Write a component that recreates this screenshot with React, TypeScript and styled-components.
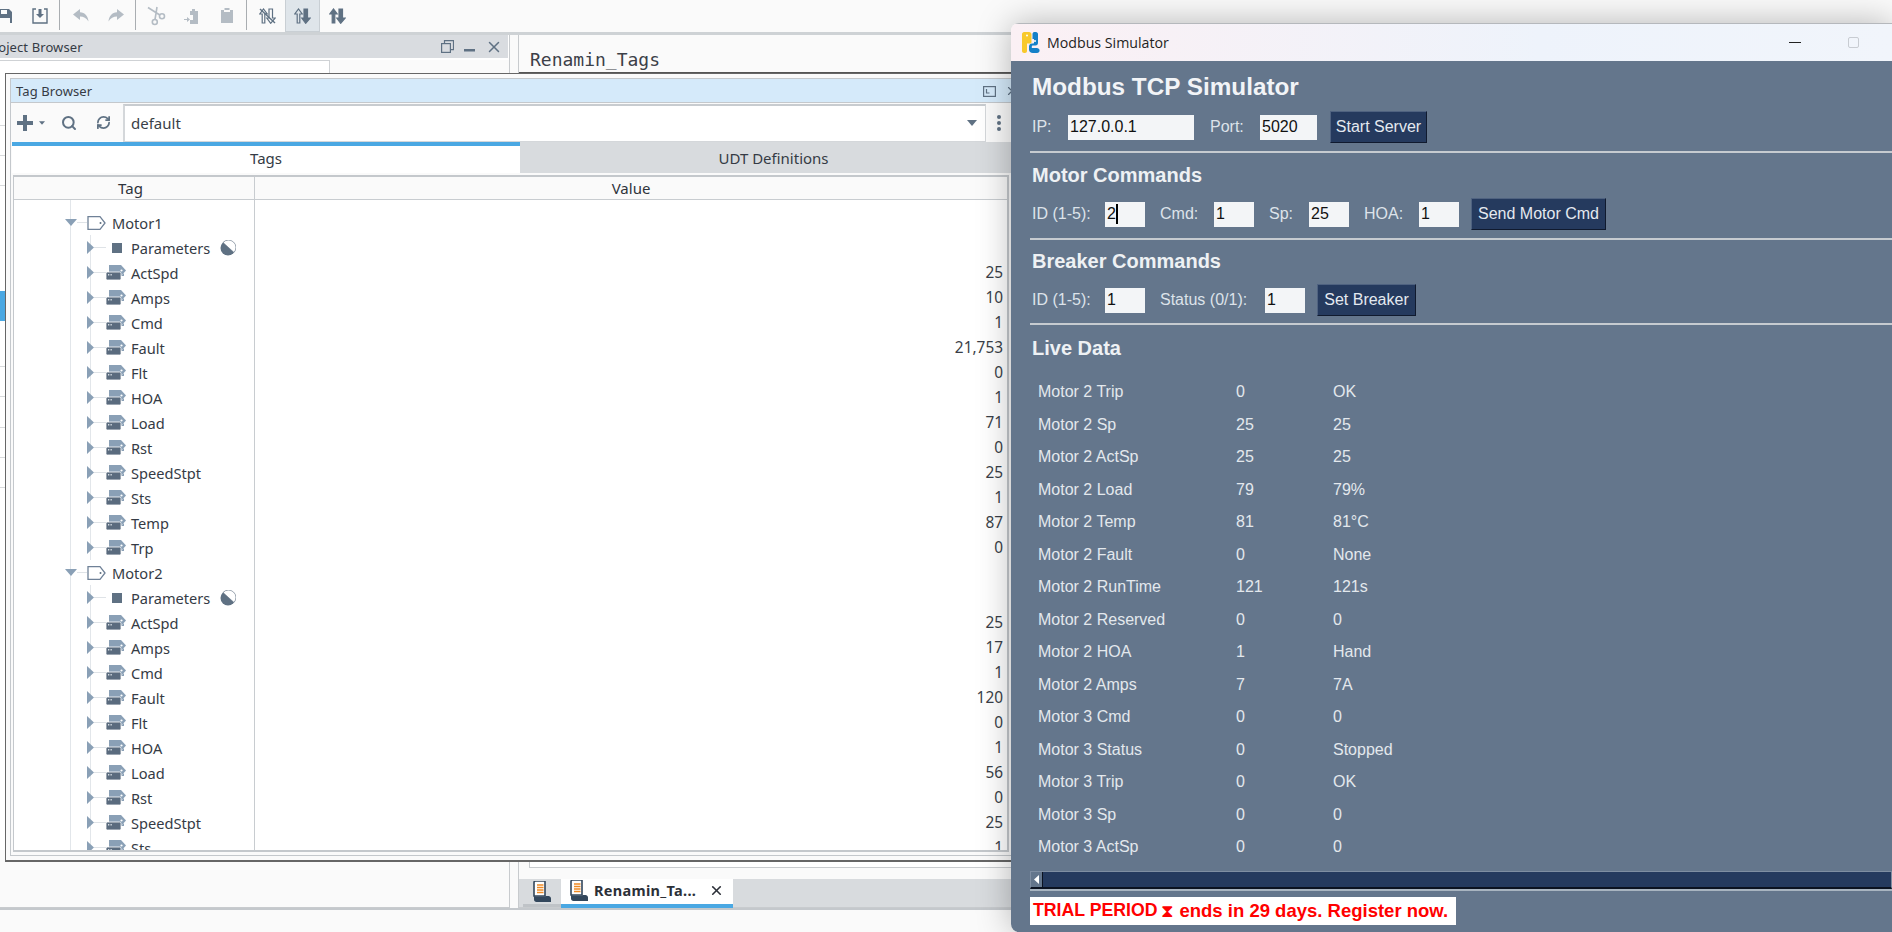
import React from 'react';
import styled, { createGlobalStyle } from 'styled-components';
import { Search, RefreshCw, X } from 'lucide-react';

const GlobalStyle = createGlobalStyle`
  html, body {
    margin: 0;
    height: 100%;
    overflow: hidden;
    background: #fafafa;
  }
  #root {
    height: 100%;
  }
  * {
    box-sizing: border-box;
  }
`;

const UI_FONT = `"Noto Sans", "Open Sans", sans-serif`;
const SIM_FONT = `"Liberation Sans", Arial, sans-serif`;

const Desk = styled.div`
  position: relative;
  width: 100%;
  height: 100%;
  overflow: hidden;
  font-family: ${UI_FONT};
  font-size: 15px;
  color: #353b45;
`;

const Ide = styled.div`
  display: flex;
  flex-direction: column;
  height: 100%;
`;

const Toolbar = styled.div`
  flex: none;
  height: 35px;
  display: flex;
  align-items: flex-start;
  border-bottom: 3px solid #ced2d5;
  overflow: hidden;
`;

const ToolStrip = styled.div`
  display: flex;
  height: 32px;
  margin-left: -13px;
`;

const ToolButton = styled.div<{ $active?: boolean }>`
  width: 35px;
  height: 32px;
  display: flex;
  align-items: center;
  justify-content: center;
  color: #5f7183;
  background: ${(p) => (p.$active ? '#dfe5ea' : 'transparent')};
  border: 1px solid ${(p) => (p.$active ? '#c9cfd4' : 'transparent')};
  border-top: none;
`;

const ToolSep = styled.div`
  width: 1px;
  height: 30px;
  margin: 0 3px 0 2px;
  background: #a9adb1;
`;

const Workspace = styled.div`
  flex: 1;
  min-height: 0;
  display: flex;
`;

const LeftPane = styled.div`
  width: 510px;
  display: flex;
  flex-direction: column;
  border-right: 1px solid #c8cbce;
  border-bottom: 1px solid #c8cbce;
  background: #fff;
`;

const DockTitle = styled.div`
  height: 23px;
  flex: none;
  display: flex;
  align-items: center;
  justify-content: space-between;
  background: #d9dce0;
  margin-right: 1px;
  padding-right: 5px;
  overflow: hidden;
`;

const DockName = styled.span`
  margin-left: -15px;
  white-space: nowrap;
  font-size: 13px;
  letter-spacing: 0.1px;
`;

const DockIcons = styled.div`
  display: flex;
  align-items: center;
  gap: 10px;
  color: #5f7183;
`;

const DockBody = styled.div`
  flex: 1;
  display: flex;
  align-items: flex-start;
  background: #fafafa;
  border-top: 2px solid #fff;
`;

const TreePanel = styled.div`
  width: 330px;
  height: 790px;
  background: #fff;
  border-right: 1px solid #cfd2d5;
  border-top: 1px solid #cfd2d5;
  padding-top: 38px;
`;

const TreeRow = styled.div<{ $h: number; $selected?: boolean; $plain?: boolean }>`
  height: ${(p) => p.$h}px;
  background: ${(p) => (p.$selected ? '#4aa8e3' : 'transparent')};
  border-bottom: 1px solid ${(p) => (p.$plain ? 'transparent' : '#d8dadc')};
`;

const Gutter = styled.div`
  width: 9px;
  flex: none;
  background: #fafafa;
  border-right: 1px solid #c8cbce;
`;

const CenterPane = styled.div`
  flex: 1;
  display: flex;
  flex-direction: column;
  min-width: 0;
`;

const FileHeader = styled.div`
  height: 38px;
  flex: none;
  display: flex;
  align-items: center;
  padding: 12px 0 0 11px;
  font-family: "DejaVu Sans Mono", monospace;
  font-size: 18px;
  color: #3c4048;
  border-bottom: 1px solid #555;
`;

const FileBody = styled.div`
  flex: 1;
  background: #fafafa;
  padding: 0 0 0 10px;
`;

const FileTable = styled.div`
  height: 795px;
  border: 1px solid #c8cbce;
  background: #fff;
`;

const TabStrip = styled.div`
  height: 29px;
  flex: none;
  display: flex;
  align-items: flex-start;
  background: #d8dbde;
  border-bottom: 1px solid #c8cbce;
`;

const StripIcon = styled.div`
  width: 38px;
  height: 28px;
  margin-left: 4px;
  display: flex;
  align-items: center;
  justify-content: center;
  border-bottom: 3px solid #bfc3c7;
`;

const FileTab = styled.div`
  width: 172px;
  height: 29px;
  display: flex;
  align-items: center;
  gap: 6px;
  padding: 0 9px 3px 9px;
  background: #fff;
  border-bottom: 4px solid #4aa8e3;
  font-weight: 700;
  color: #2c3038;
`;

const FileTabName = styled.span`
  flex: 1;
  font-size: 14.5px;
  white-space: nowrap;
  letter-spacing: 0.3px;
`;

const StatusBar = styled.div`
  flex: none;
  height: 24px;
  border-top: 2px solid #c4c8cc;
  background: #fafafa;
`;

/* floating tag browser */
const TagWindow = styled.div`
  position: absolute;
  left: 5px;
  top: 73px;
  width: 1020px;
  height: 789px;
  padding: 4px 0 4px 4px;
  background: #fafafa;
  border: 1px solid #666;
  border-bottom-width: 2px;
  display: flex;
  flex-direction: column;
`;

const TagFrame = styled.div`
  flex: 1;
  min-height: 0;
  display: flex;
  flex-direction: column;
  border: 1px solid #c4c8cc;
  border-right: none;
`;

const TagTitle = styled.div`
  height: 24px;
  flex: none;
  display: flex;
  align-items: center;
  justify-content: space-between;
  padding: 1px 0 0 5px;
  font-size: 13px;
  background: #d5eafa;
  border-bottom: 1px solid #c4c8cc;
  letter-spacing: 0.1px;
`;

const TitleIcons = styled.div`
  display: flex;
  align-items: center;
  gap: 9px;
  color: #5f7183;
  padding-right: 5px;
`;

const TagTools = styled.div`
  height: 39px;
  flex: none;
  display: flex;
  align-items: center;
  color: #5f7183;
  padding-left: 6px;
`;

const TagToolIcon = styled.div<{ $w: number }>`
  width: ${(p) => p.$w}px;
  display: flex;
  align-items: center;
  justify-content: flex-start;
`;

const ProviderSelect = styled.div`
  width: 863px;
  height: 38px;
  display: flex;
  align-items: center;
  justify-content: space-between;
  padding: 0 8px 0 6px;
  background: #fff;
  border: 1px solid #d4d7da;
  border-top: 2px solid #c8ccd0;
  border-left: 2px solid #d4d7da;
  font-size: 15px;
  color: #3a3f48;
`;

const Dots = styled.div`
  margin-left: 11px;
  display: flex;
  flex-direction: column;
  gap: 2px;
`;

const Dot = styled.span`
  width: 4px;
  height: 4px;
  border-radius: 50%;
  background: #5f7183;
`;

const TabBar = styled.div`
  height: 31px;
  flex: none;
  display: flex;
  margin-left: 1px;
`;

const TabItem = styled.div<{ $active?: boolean }>`
  width: ${(p) => (p.$active ? '508px' : 'auto')};
  flex: ${(p) => (p.$active ? 'none' : '1')};
  display: flex;
  align-items: center;
  justify-content: center;
  background: ${(p) => (p.$active ? '#fff' : '#d8dbde')};
  border-top: 4px solid ${(p) => (p.$active ? '#4aa8e3' : '#d8dbde')};
  padding: 0 0 4px ${(p) => (p.$active ? 0 : 3)}px;
  font-size: 15px;
`;

const TablePane = styled.div`
  width: 996px;
  flex: 1;
  min-height: 0;
  margin: 2px 0 3px 2px;
  display: flex;
  flex-direction: column;
  border: 1px solid #c4c8cc;
  border-width: 2px 2px 2px 1px;
`;

const TableHeader = styled.div`
  height: 23px;
  flex: none;
  display: grid;
  grid-template-columns: 241px 1fr;
  background: #fafafa;
  border-bottom: 1px solid #c8ccd0;
`;

const HeaderCell = styled.div`
  display: flex;
  align-items: center;
  justify-content: center;
  font-size: 15px;
  color: #2f343c;
  &:first-child {
    border-right: 1px solid #c8ccd0;
    padding-right: 7px;
  }
`;

const TableBody = styled.div`
  flex: 1;
  min-height: 0;
  display: grid;
  grid-template-columns: 241px 1fr;
  overflow: hidden;
  background: #fff;
`;

const TagColumn = styled.div`
  padding-top: 10px;
  border-right: 1px solid #c8ccd0;
  background: linear-gradient(#e2e6ea, #e2e6ea) 56px 0 / 1px 100% no-repeat;
`;

const ValueColumn = styled.div`
  padding: 10px 4px 0 0;
`;

const TreeItem = styled.div<{ $level: number }>`
  height: 25px;
  display: flex;
  align-items: center;
  padding-left: ${(p) => (p.$level === 0 ? 51 : 73)}px;
  font-size: 14.6px;
  white-space: nowrap;
  background: ${(p) =>
    p.$level === 0 ? 'none' : 'linear-gradient(#e2e6ea, #e2e6ea) 76px 0 / 1px 100% no-repeat'};
`;

const Connector = styled.span<{ $w: number }>`
  width: ${(p) => p.$w}px;
  height: 1px;
  flex: none;
  background: #dfe3e7;
`;

const ItemIcon = styled.span`
  width: 25px;
  flex: none;
  display: flex;
  align-items: center;
`;

const MotorName = styled.span`
  margin-left: 6px;
`;

const ValueCell = styled.div`
  height: 25px;
  display: flex;
  align-items: center;
  justify-content: flex-end;
  font-size: 15.4px;
  color: #3a3f48;
`;

const StateIcon = styled.span`
  margin-left: 10px;
  display: flex;
`;

/* modbus simulator window */
const SimWindow = styled.div`
  position: absolute;
  left: 1011px;
  top: 23px;
  right: 0;
  bottom: 0;
  display: flex;
  flex-direction: column;
  border-radius: 8px 0 0 8px;
  overflow: hidden;
  box-shadow: 0 0 34px rgba(0, 0, 0, 0.28);
`;

const SimTitle = styled.div`
  height: 38px;
  flex: none;
  display: flex;
  align-items: center;
  padding: 0 0 1px 11px;
  background: linear-gradient(90deg, #fbf0f4, #eef3fb 60%, #f1f5fb);
  border-top: 1px solid #b5b8bc;
  font-size: 14.2px;
  color: #1f1f1f;
  font-family: "Open Sans", "Noto Sans", sans-serif;
`;

const SimTitleText = styled.span`
  margin-left: 7px;
  flex: 1;
`;

const WinButton = styled.span`
  width: 58px;
  display: flex;
  justify-content: center;
`;

const WinSpacer = styled.span`
  width: 10px;
`;

const MinGlyph = styled.span`
  width: 12px;
  height: 1px;
  background: #222;
`;

const MaxGlyph = styled.span`
  width: 11px;
  height: 11px;
  border: 1px solid #c8ccd2;
  border-radius: 2px;
`;

const SimBody = styled.div`
  flex: 1;
  min-height: 0;
  padding-left: 19px;
  background: #64768c;
  color: #e6ebf0;
  font-family: ${SIM_FONT};
  font-size: 16px;
`;

const SimHeading = styled.div`
  margin: 12px 0 0 2px;
  height: 28px;
  line-height: 28px;
  font-size: 24.3px;
  font-weight: 700;
  color: #f2f4f7;
`;

const SectionHeading = styled.div<{ $top: number }>`
  margin: ${(p) => p.$top}px 0 0 2px;
  height: 24px;
  line-height: 24px;
  font-size: 20px;
  font-weight: 700;
  color: #eef1f4;
`;

const FormRow = styled.div<{ $top: number }>`
  margin: ${(p) => p.$top}px 0 0 2px;
  height: 32px;
  display: flex;
  align-items: center;
`;

const FieldLabel = styled.span<{ $w: number; $gap?: number }>`
  width: ${(p) => p.$w}px;
  margin-left: ${(p) => p.$gap ?? 0}px;
  flex: none;
  color: #dde3ea;
  white-space: nowrap;
`;

const Field = styled.div<{ $w: number }>`
  width: ${(p) => p.$w}px;
  height: 25px;
  flex: none;
  display: flex;
  align-items: center;
  padding-left: 2px;
  background: #f3f5f7;
  color: #111;
`;

const Caret = styled.span`
  width: 2px;
  height: 20px;
  background: #000;
`;

const SimButton = styled.div<{ $w: number; $gap: number }>`
  width: ${(p) => p.$w}px;
  height: 32px;
  margin-left: ${(p) => p.$gap}px;
  flex: none;
  display: flex;
  align-items: center;
  justify-content: center;
  background: #253a5e;
  color: #e4e9f0;
  border: 1px solid;
  border-color: #4f6280 #101a2e #101a2e #4f6280;
`;

const Divider = styled.div<{ $top: number }>`
  height: 2px;
  margin-top: ${(p) => p.$top}px;
  background: #c6cbd0;
`;

const DataList = styled.div`
  margin-top: 16px;
`;

const DataRow = styled.div`
  height: 32.5px;
  display: grid;
  grid-template-columns: 198px 97px 1fr;
  align-items: center;
  padding-left: 8px;
  color: #e3e8ed;
`;

const ScrollTrack = styled.div`
  height: 18px;
  margin-top: 7px;
  display: flex;
  background: #253a5e;
  border: 1px solid;
  border-color: #7f8ea2 #7f8ea2 #0b1220 #7f8ea2;
  border-bottom-width: 2px;
  box-shadow: 0 2px 0 #a8b4c0;
`;

const ScrollArrow = styled.div`
  width: 12px;
  display: flex;
  align-items: center;
  justify-content: center;
  background: #64768c;
  border-right: 1px solid #0b1220;
`;

const TrialNote = styled.div`
  width: 426px;
  height: 28px;
  margin-top: 8px;
  padding-left: 3px;
  display: flex;
  align-items: center;
  white-space: nowrap;
  background: #fff;
  color: #ff0000;
  font-size: 17.7px;
  font-weight: 700;
`;

const TrialTail = styled.span`
  font-size: 18.5px;
`;

const HourGlass = styled.span`
  font-family: "DejaVu Sans", sans-serif;
  font-size: 18px;
  margin: 0 5px 0 4px;
  font-weight: 400;
`;

/* icons */
const Floppy = () => (
  <svg width="16" height="16" viewBox="0 0 16 16" fill="#5f7183">
    <path d="M1 1h11l3 3v11H1z" />
    <rect x="4" y="2" width="6" height="4" fill="#fafafa" />
    <rect x="3" y="10" width="10" height="5" fill="#fafafa" />
  </svg>
);

const SaveDown = () => (
  <svg width="16" height="16" viewBox="0 0 16 16" fill="none" stroke="#5f7183" strokeWidth="1.4">
    <path d="M4 1H1v14h14V1h-3" />
    <path d="M6.500 1h3v5H12L8 10 4 6h2.500z" fill="#5f7183" stroke="none" />
  </svg>
);

const Undo = ({ flip }: { flip?: boolean }) => (
  <svg
    width="16"
    height="13"
    viewBox="0 0 16 13"
    fill="#b4bcc4"
    style={flip ? { transform: 'scaleX(-1)' } : undefined}
  >
    <path d="M7 0L0 5.500 7 11V7.500c3.500 0 6.500 1.500 8.500 5C15 7 12 3.500 7 3.200z" />
  </svg>
);

const ScissorsIcon = () => (
  <svg width="20" height="20" viewBox="0 0 20 20" fill="none" stroke="#b4bcc4" strokeWidth="1.6">
    <path d="M1 1.500L12.800 9M10 1L8 13.500" />
    <circle cx="7.800" cy="16" r="2.500" />
    <circle cx="15" cy="10.300" r="2.500" />
  </svg>
);

const PasteIn = () => (
  <svg width="16" height="16" viewBox="0 0 16 16" fill="#b4bcc4">
    <path d="M6 3h2V1h3v2h3v13H6v-4h3V7H6z" />
    <path d="M0 11h3V9l3 2.500L3 14v-2H0z" />
  </svg>
);

const Clip = () => (
  <svg width="12" height="15" viewBox="0 0 12 15" fill="#b4bcc4">
    <path d="M0 2h3.500V0h5v2H12v13H0z" />
    <rect x="3" y="2" width="6" height="2" fill="#fafafa" />
  </svg>
);

const SortArrows = ({ upFilled, downFilled, slashed }: { upFilled?: boolean; downFilled?: boolean; slashed?: boolean }) => (
  <svg width="17" height="16" viewBox="0 0 17 16" fill="none" stroke="#5f7183" strokeWidth="1.2">
    <path d="M3.200 15V6H.8L4.500 1 8.200 6H5.800v9z" fill={upFilled ? '#5f7183' : 'none'} />
    <path d="M10 1h3.500v9h2.700L11.700 15.300 7.800 10H10z" fill={downFilled ? '#5f7183' : 'none'} />
    {slashed && <path d="M1 1l15 14" strokeWidth="1.4" />}
  </svg>
);

const RestoreIcon = () => (
  <svg width="13" height="13" viewBox="0 0 13 13" fill="none" stroke="#5f7183" strokeWidth="1.2">
    <rect x="0.6" y="3.600" width="8.800" height="8.800" />
    <path d="M3.500 3.500V0.600h9v9H9.500" />
  </svg>
);

const MinIcon = () => (
  <svg width="11" height="11" viewBox="0 0 11 11" fill="#5f7183">
    <rect x="0" y="8" width="11" height="2.500" />
  </svg>
);

const PanelIcon = () => (
  <svg width="13" height="11" viewBox="0 0 13 11" fill="none" stroke="#5f7183" strokeWidth="1.2">
    <rect x="0.6" y="0.6" width="11.800" height="9.800" />
    <path d="M3.500 3v4h3" />
  </svg>
);

const Plus = () => (
  <svg width="16" height="16" viewBox="0 0 16 16" fill="#5f7183">
    <path d="M6 0h4v6h6v4h-6v6H6v-6H0V6h6z" />
  </svg>
);

const Caret8 = ({ w, color }: { w: number; color: string }) => (
  <svg width={w} height={w / 2 + 1} viewBox="0 0 12 7" fill={color}>
    <path d="M0 0h12L6 7z" />
  </svg>
);

const DownCaret = () => (
  <svg width="12" height="7" viewBox="0 0 12 7" fill="#8aa0b6" style={{ flex: 'none' }}>
    <path d="M0 0h12L6 7z" />
  </svg>
);

const RightCaret = () => (
  <svg width="7" height="13" viewBox="0 0 7 13" fill="#8aa0b6" style={{ flex: 'none' }}>
    <path d="M0 0l7 6.500L0 13z" />
  </svg>
);

const FolderTag = () => (
  <svg width="19" height="14" viewBox="0 0 19 14" fill="none" style={{ flex: 'none' }}>
    <path d="M1 .7h12l5 6.300-5 6.300H1z" stroke="#6f8197" strokeWidth="1.3" />
    <circle cx="13.500" cy="7" r="1" fill="#5f7183" />
  </svg>
);

const DataTag = () => (
  <svg width="20" height="16" viewBox="0 0 20 16" style={{ flex: 'none' }}>
    <path d="M3 0h12l5 5.500L15 11H3z" fill="#8aa0b6" />
    <path d="M15 11l3-3v3z" fill="#8aa0b6" />
    <circle cx="15.500" cy="5.500" r="1.100" fill="#fff" />
    <rect x="0" y="7" width="15" height="8" rx="1.500" fill="#5a6b7e" stroke="#fff" strokeWidth="0.8" />
    <rect x="2" y="9" width="1.300" height="1.500" fill="#d8dee4" />
    <rect x="4.500" y="9" width="1.300" height="1.500" fill="#d8dee4" />
  </svg>
);

const SquareMark = () => (
  <svg width="16" height="10" viewBox="0 0 16 10">
    <rect x="6" y="0" width="10" height="10" fill="#5f7183" />
  </svg>
);

const HalfCircle = () => (
  <svg width="16" height="16" viewBox="0 0 16 16">
    <circle cx="8" cy="8" r="7.500" fill="#5f7183" />
    <path d="M3 2.500A7 7 0 0 1 14 12.500z" fill="#fff" stroke="#5f7183" strokeWidth="0.6" />
  </svg>
);

const PythonLogo = () => (
  <svg width="18" height="21" viewBox="0 0 18 21">
    <path
      d="M2 0h5c1.500 0 2.500 1 2.500 2.500V10c0 1-.7 1.500-1.500 1.500H5V19c0 1-1 2-2 2H2c-1 0-2-1-2-2V2c0-1 1-2 2-2z"
      fill="#f8c92c"
    />
    <circle cx="5" cy="3.500" r="1" fill="#fff" />
    <path
      d="M12 0h2c1 0 2 1 2 2v9c0 1.500-1 2.500-2.500 2.500H11c-.8 0-1.200.5-1.200 1.200V16h5c1.500 0 2.800 1 2.800 2.500S16.500 21 15 21h-4c-2.500 0-4-1.500-4-3.500v-3c0-2 1.500-3 3-3h1c.6 0 1-.4 1-1V7h-1.500V2c0-1 .8-2 1.500-2z"
      fill="#1481c8"
    />
    <circle cx="13" cy="9" r="1" fill="#fff" />
  </svg>
);

const DocIcon = () => (
  <svg width="18" height="21" viewBox="0 0 18 21">
    <path d="M1 1.500C1 .7 1.700 0 2.500 0H12v15H1z" fill="#fff" stroke="#33475c" strokeWidth="1.600" />
    <path d="M3 15.500h9.500V15h3c1.200 0 2.500 1 2.500 2.500V21H3.500C2 21 1 20 1 18.500V15z" fill="#33475c" />
    <path d="M4 4h6.500M4 6.500h6.500M4 9h6.500M4 11.500h6.500" stroke="#f08a24" strokeWidth="1.300" />
  </svg>
);

const tagChildren = (values: Record<string, string>) => Object.entries(values);

const motor1 = tagChildren({
  ActSpd: '25',
  Amps: '10',
  Cmd: '1',
  Fault: '21,753',
  Flt: '0',
  HOA: '1',
  Load: '71',
  Rst: '0',
  SpeedStpt: '25',
  Sts: '1',
  Temp: '87',
  Trp: '0',
});

const motor2 = tagChildren({
  ActSpd: '25',
  Amps: '17',
  Cmd: '1',
  Fault: '120',
  Flt: '0',
  HOA: '1',
  Load: '56',
  Rst: '0',
  SpeedStpt: '25',
  Sts: '1',
});

const liveData = [
  ['Motor 2 Trip', '0', 'OK'],
  ['Motor 2 Sp', '25', '25'],
  ['Motor 2 ActSp', '25', '25'],
  ['Motor 2 Load', '79', '79%'],
  ['Motor 2 Temp', '81', '81°C'],
  ['Motor 2 Fault', '0', 'None'],
  ['Motor 2 RunTime', '121', '121s'],
  ['Motor 2 Reserved', '0', '0'],
  ['Motor 2 HOA', '1', 'Hand'],
  ['Motor 2 Amps', '7', '7A'],
  ['Motor 3 Cmd', '0', '0'],
  ['Motor 3 Status', '0', 'Stopped'],
  ['Motor 3 Trip', '0', 'OK'],
  ['Motor 3 Sp', '0', '0'],
  ['Motor 3 ActSp', '0', '0'],
];

const leftRows: { h: number; selected?: boolean; plain?: boolean }[] = [
  { h: 27 },
  { h: 30 },
  { h: 30 },
  { h: 105, plain: true },
  { h: 30, selected: true, plain: true },
  { h: 46 },
  { h: 30 },
  { h: 31 },
  { h: 30 },
  { h: 30 },
];

function MotorTree({ name, tags }: { name: string; tags: [string, string][] }) {
  return (
    <>
      <TreeItem $level={0}>
        <DownCaret />
        <Connector $w={10} />
        <FolderTag />
        <MotorName>{name}</MotorName>
      </TreeItem>
      <TreeItem $level={1}>
        <RightCaret />
        <Connector $w={12} />
        <ItemIcon>
          <SquareMark />
        </ItemIcon>
        Parameters
        <StateIcon>
          <HalfCircle />
        </StateIcon>
      </TreeItem>
      {tags.map(([tag]) => (
        <TreeItem $level={1} key={tag}>
          <RightCaret />
          <Connector $w={12} />
          <ItemIcon>
            <DataTag />
          </ItemIcon>
          {tag}
        </TreeItem>
      ))}
    </>
  );
}

function MotorValues({ tags }: { tags: [string, string][] }) {
  return (
    <>
      <ValueCell />
      <ValueCell />
      {tags.map(([tag, value]) => (
        <ValueCell key={tag}>{value}</ValueCell>
      ))}
    </>
  );
}

function App() {
  return (
    <Desk>
      <GlobalStyle />
      <Ide>
        <Toolbar>
          <ToolStrip>
            <ToolButton>
              <Floppy />
            </ToolButton>
            <ToolButton>
              <SaveDown />
            </ToolButton>
            <ToolSep />
            <ToolButton>
              <Undo />
            </ToolButton>
            <ToolButton>
              <Undo flip />
            </ToolButton>
            <ToolSep />
            <ToolButton>
              <ScissorsIcon />
            </ToolButton>
            <ToolButton>
              <PasteIn />
            </ToolButton>
            <ToolButton>
              <Clip />
            </ToolButton>
            <ToolSep />
            <ToolButton>
              <SortArrows slashed />
            </ToolButton>
            <ToolButton $active>
              <SortArrows downFilled />
            </ToolButton>
            <ToolButton>
              <SortArrows upFilled downFilled />
            </ToolButton>
          </ToolStrip>
        </Toolbar>

        <Workspace>
          <LeftPane>
            <DockTitle>
              <DockName>Project Browser</DockName>
              <DockIcons>
                <RestoreIcon />
                <MinIcon />
                <X size={18} strokeWidth={2} />
              </DockIcons>
            </DockTitle>
            <DockBody>
              <TreePanel>
                {leftRows.map((row, i) => (
                  <TreeRow key={i} $h={row.h} $selected={row.selected} $plain={row.plain} />
                ))}
              </TreePanel>
            </DockBody>
          </LeftPane>
          <Gutter />
          <CenterPane>
            <FileHeader>Renamin_Tags</FileHeader>
            <FileBody>
              <FileTable />
            </FileBody>
            <TabStrip>
              <StripIcon>
                <DocIcon />
              </StripIcon>
              <FileTab>
                <DocIcon />
                <FileTabName>Renamin_Ta...</FileTabName>
                <X size={15} strokeWidth={2.6} color="#2c3038" />
              </FileTab>
            </TabStrip>
          </CenterPane>
        </Workspace>
        <StatusBar />
      </Ide>

      <TagWindow>
        <TagFrame>
          <TagTitle>
            Tag Browser
            <TitleIcons>
              <PanelIcon />
              <X size={14} strokeWidth={2} />
            </TitleIcons>
          </TagTitle>
          <TagTools>
            <TagToolIcon $w={22}>
              <Plus />
            </TagToolIcon>
            <TagToolIcon $w={22}>
              <Caret8 w={6} color="#5f7183" />
            </TagToolIcon>
            <TagToolIcon $w={35}>
              <Search size={16} strokeWidth={3} />
            </TagToolIcon>
            <TagToolIcon $w={27}>
              <RefreshCw size={15} strokeWidth={2.8} />
            </TagToolIcon>
            <ProviderSelect>
              default
              <Caret8 w={10} color="#5f7183" />
            </ProviderSelect>
            <Dots>
              <Dot />
              <Dot />
              <Dot />
            </Dots>
          </TagTools>
          <TabBar>
            <TabItem $active>Tags</TabItem>
            <TabItem>UDT Definitions</TabItem>
          </TabBar>
          <TablePane>
            <TableHeader>
              <HeaderCell>Tag</HeaderCell>
              <HeaderCell>Value</HeaderCell>
            </TableHeader>
            <TableBody>
              <TagColumn>
                <MotorTree name="Motor1" tags={motor1} />
                <MotorTree name="Motor2" tags={motor2} />
              </TagColumn>
              <ValueColumn>
                <MotorValues tags={motor1} />
                <MotorValues tags={motor2} />
              </ValueColumn>
            </TableBody>
          </TablePane>
        </TagFrame>
      </TagWindow>

      <SimWindow>
        <SimTitle>
          <PythonLogo />
          <SimTitleText>Modbus Simulator</SimTitleText>
          <WinButton>
            <MinGlyph />
          </WinButton>
          <WinButton>
            <MaxGlyph />
          </WinButton>
          <WinSpacer />
        </SimTitle>
        <SimBody>
          <SimHeading>Modbus TCP Simulator</SimHeading>
          <FormRow $top={10}>
            <FieldLabel $w={36}>IP:</FieldLabel>
            <Field $w={126}>127.0.0.1</Field>
            <FieldLabel $w={50} $gap={16}>
              Port:
            </FieldLabel>
            <Field $w={57}>5020</Field>
            <SimButton $w={97} $gap={13}>
              Start Server
            </SimButton>
          </FormRow>
          <Divider $top={8} />
          <SectionHeading $top={10}>Motor Commands</SectionHeading>
          <FormRow $top={11}>
            <FieldLabel $w={73}>ID (1-5):</FieldLabel>
            <Field $w={40}>
              2
              <Caret />
            </Field>
            <FieldLabel $w={54} $gap={15}>
              Cmd:
            </FieldLabel>
            <Field $w={40}>1</Field>
            <FieldLabel $w={40} $gap={15}>
              Sp:
            </FieldLabel>
            <Field $w={40}>25</Field>
            <FieldLabel $w={55} $gap={15}>
              HOA:
            </FieldLabel>
            <Field $w={40}>1</Field>
            <SimButton $w={135} $gap={12}>
              Send Motor Cmd
            </SimButton>
          </FormRow>
          <Divider $top={8} />
          <SectionHeading $top={9}>Breaker Commands</SectionHeading>
          <FormRow $top={11}>
            <FieldLabel $w={73}>ID (1-5):</FieldLabel>
            <Field $w={40}>1</Field>
            <FieldLabel $w={105} $gap={15}>
              Status (0/1):
            </FieldLabel>
            <Field $w={40}>1</Field>
            <SimButton $w={99} $gap={12}>
              Set Breaker
            </SimButton>
          </FormRow>
          <Divider $top={7} />
          <SectionHeading $top={11}>Live Data</SectionHeading>
          <DataList>
            {liveData.map(([label, raw, shown]) => (
              <DataRow key={label}>
                <span>{label}</span>
                <span>{raw}</span>
                <span>{shown}</span>
              </DataRow>
            ))}
          </DataList>
          <ScrollTrack>
            <ScrollArrow>
              <svg width="5" height="9" viewBox="0 0 5 9" fill="#fff">
                <path d="M5 0L0 4.500 5 9z" />
              </svg>
            </ScrollArrow>
          </ScrollTrack>
          <TrialNote>
            TRIAL PERIOD<HourGlass>⧗</HourGlass>
            <TrialTail>ends in 29 days. Register now.</TrialTail>
          </TrialNote>
        </SimBody>
      </SimWindow>
    </Desk>
  );
}

export default App;
